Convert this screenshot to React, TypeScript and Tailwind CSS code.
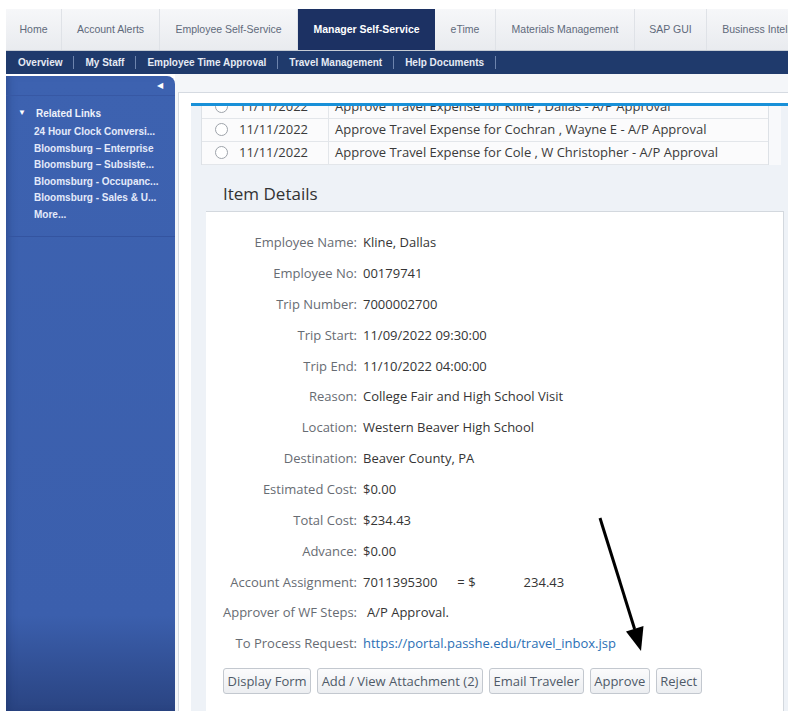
import React from "react";

const tabs = [
  { label: "Home", w: "w-[56px]" },
  { label: "Account Alerts", w: "w-[98px]" },
  { label: "Employee Self-Service", w: "w-[138px]" },
  { label: "Manager Self-Service", w: "w-[137px]", active: true },
  { label: "eTime", w: "w-[61px]" },
  { label: "Materials Management", w: "w-[139px]" },
  { label: "SAP GUI", w: "w-[72px]" },
  { label: "Business Intelligence", w: "w-[130px]" },
];

const subNav = ["Overview", "My Staff", "Employee Time Approval", "Travel Management", "Help Documents"];

const relatedLinks = [
  "24 Hour Clock Conversi...",
  "Bloomsburg – Enterprise",
  "Bloomsburg – Subsiste...",
  "Bloomsburg - Occupanc...",
  "Bloomsburg - Sales & U...",
  "More...",
];

const workItems = [
  { date: "11/11/2022", text: "Approve Travel Expense for Kline , Dallas - A/P Approval" },
  { date: "11/11/2022", text: "Approve Travel Expense for Cochran , Wayne E - A/P Approval" },
  { date: "11/11/2022", text: "Approve Travel Expense for Cole , W Christopher - A/P Approval" },
];

const details: { label: string; value: React.ReactNode }[] = [
  { label: "Employee Name:", value: "Kline, Dallas" },
  { label: "Employee No:", value: "00179741" },
  { label: "Trip Number:", value: "7000002700" },
  { label: "Trip Start:", value: "11/09/2022 09:30:00" },
  { label: "Trip End:", value: "11/10/2022 04:00:00" },
  { label: "Reason:", value: "College Fair and High School Visit" },
  { label: "Location:", value: "Western Beaver High School" },
  { label: "Destination:", value: "Beaver County, PA" },
  { label: "Estimated Cost:", value: "$0.00" },
  { label: "Total Cost:", value: "$234.43" },
  { label: "Advance:", value: "$0.00" },
  {
    label: "Account Assignment:",
    value: (
      <span className="flex">
        <span>7011395300</span>
        <span className="ml-[20px]">= $</span>
        <span className="ml-[48px]">234.43</span>
      </span>
    ),
  },
  { label: "Approver of WF Steps:", value: <span className="ml-[4px]">A/P Approval.</span> },
  {
    label: "To Process Request:",
    value: <span className="text-[#2b6fb5]">https://portal.passhe.edu/travel_inbox.jsp</span>,
  },
];

const actions = ["Display Form", "Add / View Attachment (2)", "Email Traveler", "Approve", "Reject"];

function TopTabs() {
  return (
    <div className="ml-[6px] flex h-[42px] border-b border-[#c6ccd4] bg-gradient-to-b from-[#f6f7f9] to-[#e9ebef]">
      {tabs.map((t) =>
        t.active ? (
          <div
            key={t.label}
            className={`${t.w} flex shrink-0 items-center justify-center bg-[#1c3163] text-[10.5px] font-bold text-white`}
          >
            {t.label}
          </div>
        ) : (
          <div
            key={t.label}
            className={`${t.w} flex shrink-0 items-center justify-center border-r border-[#dfe2e7] text-[10.5px] whitespace-nowrap text-[#5f6a7b]`}
          >
            {t.label}
          </div>
        )
      )}
    </div>
  );
}

function SubNav() {
  return (
    <nav className="ml-[6px] flex h-[23px] items-center bg-[#1f3a6c] pl-[1px]">
      {subNav.map((s) => (
        <div key={s} className="flex items-center">
          <span className="px-[11px] text-[10px] font-bold whitespace-nowrap text-[#e6ebf4]">{s}</span>
          <span className="h-[13px] w-px bg-[#6d84ad]" />
        </div>
      ))}
    </nav>
  );
}

function Sidebar() {
  return (
    <aside className="mt-[2px] w-[169px] shrink-0 rounded-tr-[8px] bg-gradient-to-b from-[#3d62b0] via-[#3b5fad] via-85% to-[#2a4482] shadow-[inset_6px_0_8px_-4px_rgba(20,40,90,0.35)]">
      <div className="flex h-[20px] items-center justify-end border-b border-[#3758a4] pr-[12px]">
        <span className="text-[8px] text-white">◀</span>
      </div>
      <div className="border-b border-[#3454a0] pt-[8px] pb-[12px]">
        <div className="flex h-[18px] items-center pl-[12px]">
          <span className="text-[8px] text-white">▼</span>
          <span className="ml-[10px] text-[10px] font-bold text-[#eef2fb]">Related Links</span>
        </div>
        <div className="mt-[2px] pl-[28px]">
          {relatedLinks.map((l) => (
            <div key={l} className="h-[16.6px] text-[10px] leading-[16.6px] font-bold whitespace-nowrap text-[#e4eafa]">
              {l}
            </div>
          ))}
        </div>
      </div>
    </aside>
  );
}

function WorkList() {
  return (
    <div className="flex">
      <div className="ml-[10px] h-[59px] w-[568px] overflow-hidden border-x border-[#dde1e6]">
        <div className="mt-[-10.5px] font-['Open_Sans',sans-serif] text-[13px] text-[#3a3a3a]">
          {workItems.map((r, i) => (
            <div key={i} className="flex h-[23px] border-b border-[#e3e6ea] bg-[#fbfbfc]">
              <div className="flex w-[127px] items-center border-r border-[#e3e6ea] pl-[13px]">
                <span className="h-[13px] w-[13px] rounded-full border border-[#9ea3aa] bg-white" />
                <span className="ml-[11px]">{r.date}</span>
              </div>
              <div className="flex items-center pl-[6px] whitespace-nowrap">{r.text}</div>
            </div>
          ))}
        </div>
      </div>
      <div className="h-[59px] w-[12px] bg-[#f8f9fb]" />
    </div>
  );
}

function ItemDetails() {
  return (
    <div className="font-['Open_Sans',sans-serif]">
      <div className="h-[46px] pt-[18px] pl-[32px] text-[17px] leading-[22px] text-[#333]">Item Details</div>
      <div className="mr-[4px] ml-[15px] h-[520px] border-t border-r border-[#d3d8de] bg-white pt-[15.6px] text-[13px]">
        {details.map((d) => (
          <div key={d.label} className="flex h-[30.85px] items-center whitespace-nowrap">
            <span className="w-[151px] text-right text-[#676c73]">{d.label}</span>
            <span className="ml-[6px] text-[#353535]">{d.value}</span>
          </div>
        ))}
        <div className="mt-[9px] flex gap-[6px] pl-[17px]">
          {actions.map((a) => (
            <button
              key={a}
              className="h-[26px] rounded-[3px] border border-[#c3c8cf] bg-gradient-to-b from-[#fbfbfc] to-[#eceef1] px-[3.5px] text-[13px] text-[#4f5a68]"
            >
              {a}
            </button>
          ))}
        </div>
      </div>
    </div>
  );
}

function PointerArrow() {
  return (
    <svg className="pointer-events-none absolute top-0 left-0" width="788" height="711">
      <line x1="600" y1="518" x2="634.6" y2="629" stroke="#000" strokeWidth="3" />
      <polygon points="641,651 626,631.5 643.5,626" fill="#000" />
    </svg>
  );
}

export default function App() {
  return (
    <div className="relative h-[711px] w-[788px] overflow-hidden bg-white font-['Liberation_Sans',Arial,sans-serif]">
      <div className="h-[9px]" />
      <TopTabs />
      <SubNav />
      <div className="ml-[6px] flex h-[637px]">
        <Sidebar />
        <main className="flex-1 bg-[#f4f6f9] pt-[18px] pl-[3px]">
          <div className="h-full border-t border-l border-[#d5dae1] bg-white pt-[10px] pl-[12px]">
            <div className="h-full border-t-[3px] border-[#1890d8] bg-[#eef2f7]">
              <WorkList />
              <ItemDetails />
            </div>
          </div>
        </main>
      </div>
      <PointerArrow />
    </div>
  );
}
